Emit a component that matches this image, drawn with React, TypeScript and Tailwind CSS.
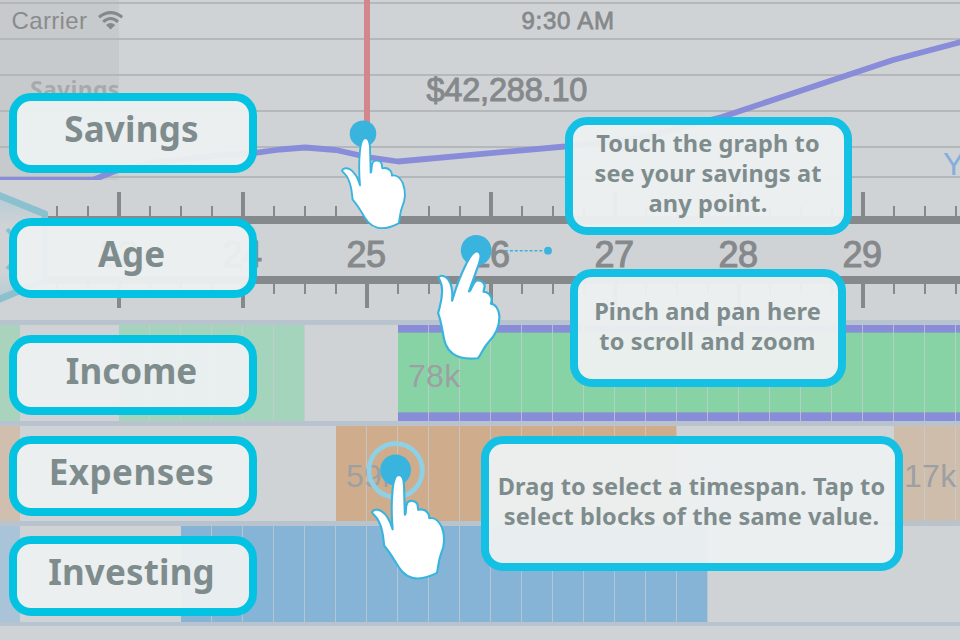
import React from "react";

const SANS = "font-['Liberation_Sans',Arial,sans-serif]";

const HAND =
  "M90 226 C87 190 87 150 90 122 C92 102 96 84 106 84 C118 84 119 98 120 112 L122 188 C127 186 122 167 129 156 C135 149 151 151 155 161 L157 175 C165 173 176 175 182 183 Q186 189 186 197 C198 194 211 203 219 221 C228 246 227 268 216 292 C209 310 210 325 206 340 C187 350 163 358 142 353 C105 343 103 309 68 269 C65 248 66 231 55 208 C49 192 41 190 36 182 C39 173 51 173 60 178 C76 188 84 205 90 226 Z";

function Hand({ transform }: { transform: string }) {
  return <path d={HAND} transform={transform} fill="#fff" stroke="#39b4de" strokeWidth="5.6" strokeLinejoin="round" />;
}

function Chart() {
  return (
    <section className="relative h-[180px] w-full overflow-hidden">
      <svg width="960" height="180" className="block">
        <rect width="119" height="180" fill="#c7cacc" />
        {[3, 39, 75, 111, 147, 177].map((y) => (
          <rect key={y} y={y - 0.9} width="960" height="1.8" fill="#b1b5b8" />
        ))}
        <polyline
          points="0,180 93,180 115,171 150,163 212,156 257,152.7 280,149.5 305,147.5 336,150 367,157 398,161.5 565,146.5 640,138 722,117 893,60 965,41"
          fill="none"
          stroke="#898cd8"
          strokeWidth="5.8"
          strokeLinejoin="round"
        />
        <rect x="364" width="6" height="134" fill="#d3868c" />
        <g fill="none" stroke="#86898b" strokeWidth="3.1">
          <path d="M99 17.2 Q110.6 8 122.2 17.2" />
          <path d="M103.2 21.8 Q110.6 15.2 118 21.8" />
        </g>
        <path d="M106 25 Q110.6 21.2 115.2 25 L110.6 29.4 Z" fill="#86898b" />
      </svg>
      <span className={`absolute left-[11.5px] top-[7px] text-[24px] leading-[28px] tracking-[0.35px] text-[#898c8e] ${SANS}`}>Carrier</span>
      <span className={`absolute left-[521.5px] top-[7px] text-[24px] leading-[28px] tracking-[0.75px] text-[#86898b] [-webkit-text-stroke:0.8px_#86898b] ${SANS}`}>9:30 AM</span>
      <span className={`absolute left-[426.5px] top-[72px] text-[32.5px] leading-[36px] tracking-[-0.2px] text-[#86898b] [-webkit-text-stroke:1px_#86898b] ${SANS}`}>$42,288.10</span>
      <span className="absolute left-[30px] top-[73px] font-['Noto_Sans',sans-serif] text-[23px] font-bold leading-[32px] tracking-[0.3px] text-[#a7aaac]">Savings</span>
      <span className={`absolute left-[943px] top-[146px] text-[32px] leading-[36px] text-[#85aedb] ${SANS}`}>Y</span>
    </section>
  );
}

function Ticks({ below = false }: { below?: boolean }) {
  return (
    <div className={`flex w-[980px] pl-[26px] ${below ? "h-9 items-start" : "h-9 items-end"}`}>
      {Array.from({ length: 31 }, (_, i) => (
        <div key={i} className={`w-[31px] shrink-0 ${i % 4 === 3 ? "-ml-px mr-px h-6" : "h-[10px]"}`}>
          <div className={`h-full bg-[#86898b] ${i % 4 === 3 ? "-ml-px w-1" : "-ml-px w-[1.8px]"}`} />
        </div>
      ))}
    </div>
  );
}

function Ruler() {
  return (
    <section className="relative h-[140px] w-full overflow-hidden">
      <Ticks />
      <div className="h-2 bg-[#86898b]" />
      <div className={`flex h-[52px] items-center pl-[57px] pt-[9px] text-[36px] text-[#86898b] [-webkit-text-stroke:1.1px_#86898b] ${SANS}`}>
        {[23, 24, 25, 26, 27, 28, 29].map((n) => (
          <span key={n} className="w-[124px] shrink-0 -translate-x-px text-center leading-[40px] tracking-[-0.5px]">{n}</span>
        ))}
      </div>
      <div className="h-2 bg-[#86898b]" />
      <Ticks below />
      <svg width="48" height="140" className="absolute left-0 top-0">
        <defs>
          <linearGradient id="glow" x1="0" y1="0" x2="0" y2="1">
            <stop offset="0" stopColor="#b0cbd6" />
            <stop offset="0.32" stopColor="#d0d3d6" />
            <stop offset="0.7" stopColor="#d0d3d6" />
            <stop offset="1" stopColor="#b0cbd6" />
          </linearGradient>
        </defs>
        <path d="M-12 11 L45 34 V100 L-12 124 Z" fill="url(#glow)" stroke="#8bc1cf" strokeWidth="7" strokeLinejoin="round" />
        <path d="M7 49 L15 58 M7 89 L15 80" stroke="#8bc1cf" strokeWidth="4" />
      </svg>
    </section>
  );
}

function Divider() {
  return <div className="h-1 shrink-0 bg-[#b8c3d0]" />;
}

function Block({ fill, width, label, selected = false }: { fill: string; width: string; label?: string; selected?: boolean }) {
  return (
    <div className={`relative flex h-full shrink-0 items-center overflow-hidden ${fill} ${width}`}>
      {selected && <div className="absolute inset-x-0 top-0 h-2 border-b border-[#86a8bd] bg-[#898cd8]" />}
      {selected && <div className="absolute inset-x-0 bottom-0 h-[9px] border-t border-[#86a8bd] bg-[#898cd8]" />}
      <div className="absolute inset-0 flex">
        {Array.from({ length: 19 }, (_, i) => (
          <div key={i} className="w-[31px] shrink-0 border-r border-[#c6ccd2]/75" />
        ))}
      </div>
      {label && <span className={`relative pl-[10px] pt-[5px] text-[32px] leading-[36px] tracking-[0.3px] text-[#9ca0a3] ${SANS}`}>{label}</span>}
    </div>
  );
}

function Row({ children }: { children: React.ReactNode }) {
  return <div className="flex h-full w-full overflow-hidden border-t border-[#bdc3c9]">{children}</div>;
}

function Tracks() {
  return (
    <section className="flex flex-col">
      <Divider />
      <div className="h-[97px]">
        <Row>
          <Block fill="bg-[#a9d3bd]" width="w-5" />
          <div className="w-[99px] shrink-0" />
          <Block fill="bg-[#a4d4bb]" width="w-[186px]" />
          <div className="w-[93px] shrink-0" />
          <Block fill="bg-[#87d3a5]" width="w-[562px]" label="78k" selected />
        </Row>
      </div>
      <Divider />
      <div className="h-24">
        <Row>
          <Block fill="bg-[#d0bfaf]" width="w-5" />
          <div className="w-[316px] shrink-0" />
          <Block fill="bg-[#cfac8c]" width="w-[341px]" label="59k" />
          <div className="w-[217px] shrink-0" />
          <Block fill="bg-[#cfbdab]" width="w-[67px]" label="17k" />
        </Row>
      </div>
      <Divider />
      <div className="h-[97px]">
        <Row>
          <Block fill="bg-[#a9c4d8]" width="w-5" />
          <div className="w-[161px] shrink-0" />
          <Block fill="bg-[#85b4d7]" width="w-[527px]" />
        </Row>
      </div>
      <Divider />
    </section>
  );
}

function Label({ place, spacing, text }: { place: string; spacing: string; text: string }) {
  return (
    <div className={`absolute left-[9px] flex h-20 w-[248px] justify-center rounded-[22px] border-8 border-[#04c3e2] bg-[#ebeff0]/97 pr-[3px] pt-[3px] font-['Noto_Sans',sans-serif] text-[35px] font-bold leading-[50px] text-[#7f8c8d] ${place}`}>
      <span className={`whitespace-nowrap ${spacing}`}>{text}</span>
    </div>
  );
}

function Tip({ place, lines }: { place: string; lines: string[] }) {
  return (
    <div className={`absolute flex flex-col items-center rounded-[22px] border-8 border-[#15c0e5] bg-[#ebeff0]/97 pr-px font-['Noto_Sans',sans-serif] text-[23.5px] font-bold leading-[30px] tracking-[0.13px] text-[#7f8c8d] ${place}`}>
      {lines.map((text) => (
        <span key={text} className="whitespace-nowrap">{text}</span>
      ))}
    </div>
  );
}

export default function App() {
  return (
    <main className="relative h-[640px] w-[960px] overflow-hidden bg-[#d0d3d6]">
      <Chart />
      <Ruler />
      <Tracks />

      <Label place="top-[93px]" spacing="tracking-[0.2px]" text="Savings" />
      <Label place="top-[218px]" spacing="tracking-[0px]" text="Age" />
      <Label place="top-[335px]" spacing="tracking-[0px]" text="Income" />
      <Label place="top-[436px]" spacing="tracking-[0.5px]" text="Expenses" />
      <Label place="top-[536px]" spacing="tracking-[0.15px]" text="Investing" />

      <svg width="960" height="640" className="absolute left-0 top-0">
        <g fill="#39b4de">
          <circle cx="363" cy="133.7" r="13.3" />
          <circle cx="476.2" cy="250.4" r="15.4" />
          <circle cx="548" cy="250.7" r="3.9" />
          <circle cx="395.6" cy="470" r="15.4" />
        </g>
        <path d="M505 250.7 H544" stroke="#39b4de" strokeWidth="1.4" strokeDasharray="3 1.9" />
        <circle cx="395.6" cy="470.3" r="26.7" fill="none" stroke="#8ed1e6" strokeWidth="4.8" />
        <Hand transform="translate(330 110) scale(0.3333)" />
        <Hand transform="translate(477.8 251.6) rotate(21.2) scale(0.388) translate(-106 -84)" />
        <Hand transform="translate(358.2 442.9) scale(0.3823)" />
      </svg>

      <Tip
        place="left-[565px] top-[117px] h-[118px] w-[287px] pt-[3px]"
        lines={["Touch the graph to", "see your savings at", "any point."]}
      />
      <Tip
        place="left-[570px] top-[269px] h-[118px] w-[276px] pt-[19px]"
        lines={["Pinch and pan here", "to scroll and zoom"]}
      />
      <Tip
        place="left-[481px] top-[436px] h-[135px] w-[422px] pt-[27px]"
        lines={["Drag to select a timespan. Tap to", "select blocks of the same value."]}
      />
    </main>
  );
}
